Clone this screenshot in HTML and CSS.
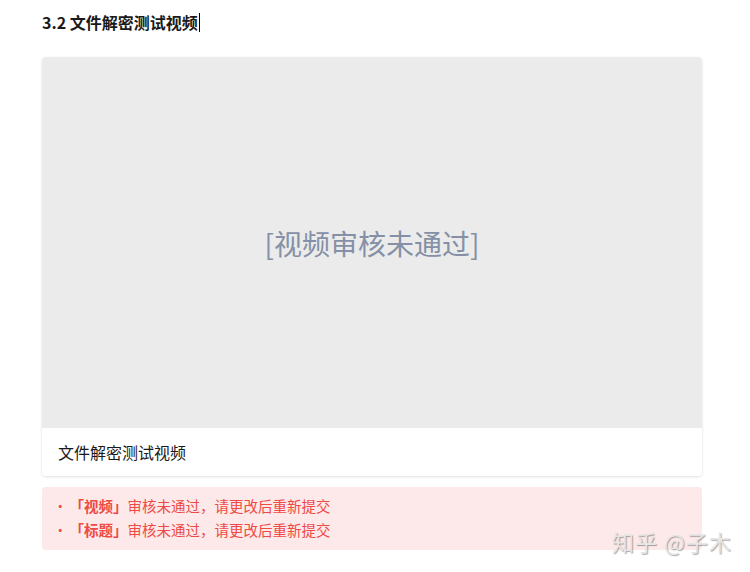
FILE: index.html
```html
<!DOCTYPE html>
<html lang="zh-CN">
<head>
    <meta charset="UTF-8">
    <title>文件解密测试视频</title>
    <link rel="stylesheet" href="styles.css">
</head>
<body>
    <div class="editor">
        <h3 class="heading">3.2 文件解密测试视频<span class="caret"></span></h3>

        <!-- video card -->
        <div class="video-card">
            <div class="video-box">[视频审核未通过]</div>
            <div class="video-title">文件解密测试视频</div>
        </div>

        <!-- review errors -->
        <ul class="review-errors">
            <li><b>「视频」</b>审核未通过，请更改后重新提交</li>
            <li><b>「标题」</b>审核未通过，请更改后重新提交</li>
        </ul>
    </div>

    <div class="watermark">知乎 @子木</div>
</body>
</html>
```

FILE: styles.css
```css
body {
    margin: 0;
    font-family: "Noto Sans CJK SC", "Liberation Sans", sans-serif;
    color: #1a1a1a;
    background: #fff;
}
.editor {
    width: 660px;
    padding: 10px 0 0 42px;
}
.heading {
    margin: 0;
    font-size: 16px;
    font-weight: bold;
    line-height: 24px;
    height: 24px;
}
.caret {
    display: inline-block;
    width: 1px;
    height: 19px;
    background: #000;
    vertical-align: -3px;
    margin-left: 1px;
}
.video-card {
    margin-top: 23px;
    border-radius: 4px;
    overflow: hidden;
    box-shadow: 0 1px 3px rgba(0, 0, 0, 0.12);
    background: #fff;
}
.video-box {
    height: 371px;
    background: #ebebeb;
    display: flex;
    align-items: center;
    justify-content: center;
    font-size: 28px;
    color: #8590a6;
}
.video-title {
    height: 48px;
    line-height: 48px;
    padding-left: 16px;
    font-size: 16px;
    color: #1a1a1a;
}
.review-errors {
    list-style: none;
    margin: 11px 0 0;
    padding: 7px 12px 8px 11px;
    background: #fde9e9;
    border-radius: 4px;
    color: #ee4a45;
    font-size: 14.5px;
    line-height: 24px;
}
.review-errors li::before {
    content: "•";
    margin-right: 2px;
}
.review-errors b {
    font-weight: bold;
}
.watermark {
    position: absolute;
    left: 612px;
    top: 525px;
    font-size: 22px;
    color: #e6e6e6;
    text-shadow: 1px 1px 1px rgba(0, 0, 0, 0.35);
    letter-spacing: 1px;
}
```
